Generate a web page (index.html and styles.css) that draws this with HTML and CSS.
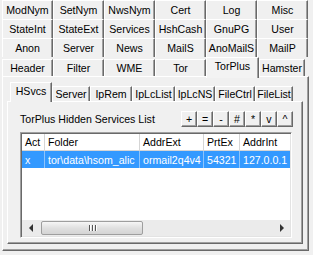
FILE: index.html
```html
<!DOCTYPE html>
<html>
<head>
<meta charset="utf-8">
<link rel="stylesheet" href="styles.css">
</head>
<body>
<div class="win">
  <div class="tabrows">
    <div class="trow">
      <div class="tab">ModNym</div><div class="tab">SetNym</div><div class="tab">NwsNym</div><div class="tab">Cert</div><div class="tab">Log</div><div class="tab">Misc</div>
    </div>
    <div class="trow">
      <div class="tab">StateInt</div><div class="tab">StateExt</div><div class="tab">Services</div><div class="tab">HshCash</div><div class="tab">GnuPG</div><div class="tab">User</div>
    </div>
    <div class="trow">
      <div class="tab">Anon</div><div class="tab">Server</div><div class="tab">News</div><div class="tab">MailS</div><div class="tab">AnoMailS</div><div class="tab">MailP</div>
    </div>
    <div class="trow last">
      <div class="tab">Header</div><div class="tab">Filter</div><div class="tab">WME</div><div class="tab">Tor</div><div class="tab sel">TorPlus</div><div class="tab narrow">Hamster</div>
    </div>
  </div>
  <div class="panel">
    <div class="itabs">
      <div class="itab sel w42">HSvcs</div>
      <div class="itab w38">Server</div>
      <div class="itab w42">IpRem</div>
      <div class="itab w43">IpLcList</div>
      <div class="itab w40">IpLcNS</div>
      <div class="itab w40">FileCtrl</div>
      <div class="itab w38">FileList</div>
    </div>
    <div class="ipanel">
      <div class="toolbar">
        <span class="lbl">TorPlus Hidden Services List</span>
        <div class="btns">
          <div class="btn">+</div><div class="btn">=</div><div class="btn">-</div><div class="btn">#</div><div class="btn">*</div><div class="btn">v</div><div class="btn">^</div>
        </div>
      </div>
      <div class="list">
        <div class="lhead">
          <div class="c c1">Act</div><div class="c c2">Folder</div><div class="c c3">AddrExt</div><div class="c c4">PrtEx</div><div class="c c5">AddrInt</div>
        </div>
        <div class="lrow">
          <div class="c c1">x</div><div class="c c2">tor\data\hsom_alic</div><div class="c c3">ormail2q4v4</div><div class="c c4">54321</div><div class="c c5">127.0.0.1</div>
        </div>
        <div class="lspace"></div>
        <div class="hscroll">
          <div class="sbtn"><span class="tri-l"></span></div>
          <div class="track">
            <div class="thumb"><span class="grip"></span><span class="grip"></span><span class="grip"></span></div>
          </div>
          <div class="sbtn"><span class="tri-r"></span></div>
        </div>
      </div>
    </div>
  </div>
</div>
</body>
</html>
```

FILE: styles.css
```css
html, body {
  margin: 0;
  padding: 0;
  background: #f0f0f0;
  width: 313px;
  height: 255px;
  overflow: hidden;
  font-family: "Liberation Sans", Arial, sans-serif;
  font-size: 10.6px;
  color: #000;
}
.win {
  padding-left: 2px;
}
.trow {
  display: flex;
  height: 19px;
}
.tab {
  box-sizing: border-box;
  width: 51px;
  height: 19px;
  border-left: 1px solid #fff;
  border-top: 1px solid #fff;
  border-right: 1px solid #696969;
  box-shadow: inset -1px 0 #a0a0a0;
  display: flex;
  align-items: center;
  justify-content: center;
  white-space: nowrap;
  background: #f0f0f0;
}
.trow.last .tab {
  height: 17px;
  margin-top: 2px;
}
.trow.last .tab.sel {
  width: 53px;
  height: 21px;
  margin-top: 0;
  margin-bottom: -2px;
  padding-bottom: 4px;
  position: relative;
  z-index: 2;
  background: #f3f3f3;
}
.trow.last .tab.narrow {
  width: 46px;
}
.panel {
  box-sizing: border-box;
  width: 307px;
  height: 175px;
  border-top: 1px solid #fff;
  border-left: 1px solid #fff;
  border-right: 1px solid #696969;
  border-bottom: 1px solid #696969;
  box-shadow: inset -1px -1px #a0a0a0;
  padding: 5px 0 0 4px;
}
.itabs {
  display: flex;
  height: 19px;
  padding-left: 3px;
}
.itab {
  box-sizing: border-box;
  height: 15px;
  margin-top: 4px;
  border-left: 1px solid #fff;
  border-top: 1px solid #fff;
  border-right: 1px solid #696969;
  box-shadow: inset -1px 0 #a0a0a0;
  display: flex;
  align-items: center;
  justify-content: center;
  white-space: nowrap;
  background: #f0f0f0;
}
.itab.sel {
  height: 20px;
  margin-top: 0;
  margin-bottom: -1px;
  padding-bottom: 3px;
  position: relative;
  z-index: 2;
}
.w38 { width: 38px; }
.w40 { width: 40px; }
.w42 { width: 42px; }
.w43 { width: 43px; }
.ipanel {
  box-sizing: border-box;
  width: 296px;
  height: 143px;
  border-top: 1px solid #fff;
  border-left: 1px solid #fff;
  border-right: 1px solid #696969;
  border-bottom: 1px solid #696969;
  box-shadow: inset -1px -1px #a0a0a0;
  padding: 9px 9px 0 12px;
}
.toolbar {
  display: flex;
  align-items: center;
  height: 16px;
}
.lbl {
  white-space: nowrap;
}
.btns {
  display: flex;
  margin-left: auto;
}
.btn {
  box-sizing: border-box;
  width: 16px;
  height: 16px;
  border-top: 1px solid #fff;
  border-left: 1px solid #fff;
  border-right: 1px solid #696969;
  border-bottom: 1px solid #696969;
  box-shadow: inset -1px -1px #a0a0a0;
  display: flex;
  align-items: center;
  justify-content: center;
}
.list {
  box-sizing: border-box;
  margin-top: 5px;
  width: 272px;
  height: 106px;
  background: #fff;
  border-top: 1px solid #a0a0a0;
  border-left: 1px solid #a0a0a0;
  border-right: 1px solid #fff;
  border-bottom: 1px solid #fff;
  box-shadow: inset 1px 1px #696969, inset -1px -1px #e3e3e3;
  padding: 1px;
  display: flex;
  flex-direction: column;
  overflow: hidden;
}
.lhead, .lrow {
  display: flex;
  flex: none;
}
.lhead {
  height: 16px;
  border-bottom: 1px solid #d5d5d5;
  background: #fff;
}
.c {
  box-sizing: border-box;
  flex: none;
  padding-left: 3px;
  white-space: nowrap;
  overflow: hidden;
  display: flex;
  align-items: center;
  border-right: 1px solid #d5d5d5;
}
.c1 { width: 23px; }
.c2 { width: 95px; }
.c3 { width: 64px; }
.c4 { width: 36px; }
.c5 { width: 52px; border-right: none; }
.lrow {
  height: 17px;
  background: #3399ff;
  color: #fff;
}
.lrow .c {
  border-right-color: #8ec4fb;
}
.lrow .c5 { border-right: none; }
.lspace {
  flex: 1;
}
.hscroll {
  flex: none;
  height: 16px;
  display: flex;
  background: #ebebeb;
}
.sbtn {
  width: 17px;
  display: flex;
  align-items: center;
  justify-content: center;
}
.tri-l {
  width: 0;
  height: 0;
  border-top: 4px solid transparent;
  border-bottom: 4px solid transparent;
  border-right: 4px solid #333;
}
.tri-r {
  width: 0;
  height: 0;
  border-top: 4px solid transparent;
  border-bottom: 4px solid transparent;
  border-left: 4px solid #333;
}
.track {
  flex: 1;
  display: flex;
  align-items: center;
}
.thumb {
  box-sizing: border-box;
  margin-left: 2px;
  width: 102px;
  height: 14px;
  border: 1px solid #9e9e9e;
  border-radius: 2px;
  background: linear-gradient(#f6f6f6, #e0e0e0 50%, #d4d4d4);
  display: flex;
  align-items: center;
  justify-content: center;
  gap: 2px;
}
.grip {
  width: 1px;
  height: 6px;
  background: #555;
  box-shadow: 1px 0 #fff;
}
```
